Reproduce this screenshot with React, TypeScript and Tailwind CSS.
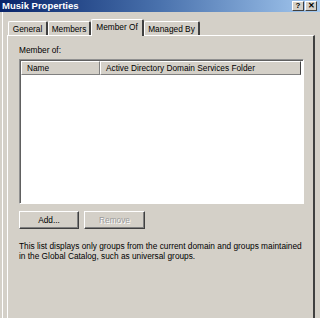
const TABS = [
  { label: 'General', width: 'w-[40px]' },
  { label: 'Members', width: 'w-[43px]' },
  { label: 'Member Of', width: 'w-[53px]', active: true },
  { label: 'Managed By', width: 'w-[56px]' },
];

const TitleButton = ({ children }: { children: React.ReactNode }) => (
  <div className="w-[12px] h-[10px] bg-[#d4d0c8] border-t border-l border-white border-r border-b border-r-[#404040] border-b-[#404040] flex items-center justify-center text-[8px] leading-none font-bold text-black">
    {children}
  </div>
);

const App = () => {
  return (
    <div className="w-[320px] h-[318px] bg-[#d4d0c8] overflow-hidden flex flex-col font-['Liberation_Sans',Arial,sans-serif] text-black">
      {/* title bar */}
      <div className="h-[12px] shrink-0 flex items-center justify-between pl-[2px] pr-[3px] bg-gradient-to-r from-[#0a246a] via-[#4a72ad] to-[#a6caf0]">
        <span className="text-white text-[9.5px] font-bold leading-none">Musik Properties</span>
        <div className="flex gap-[1px]">
          <TitleButton>?</TitleButton>
          <TitleButton>✕</TitleButton>
        </div>
      </div>

      <div className="flex-1 ml-[2px] border-l border-white pl-[4px] pr-[5px] pt-[7px] flex flex-col">
        {/* tabs */}
        <div className="flex items-end h-[16px] ml-[1px] relative z-10">
          {TABS.map((tab) =>
            tab.active ? (
              <div
                key={tab.label}
                className={`${tab.width} h-[17px] -mb-px bg-[#d4d0c8] border-t border-l border-white border-r-2 border-r-[#404040] rounded-t-[2px] text-[8.3px] leading-none flex items-start pt-[3px] justify-center`}
              >
                {tab.label}
              </div>
            ) : (
              <div
                key={tab.label}
                className={`${tab.width} h-[14px] bg-[#d4d0c8] border-t border-l border-white border-r-2 border-r-[#404040] rounded-t-[2px] text-[8.3px] leading-none flex items-center justify-center pt-[2px]`}
              >
                {tab.label}
              </div>
            ),
          )}
        </div>

        {/* tab panel */}
        <div className="flex-1 border-t border-l border-white border-r-2 border-r-[#404040] pl-[11px] pr-[9px] pt-[9px]">
          <p className="text-[8.3px] leading-[10px]">Member of:</p>

          <div className="mt-[4px] h-[145px] bg-white border border-t-[#909090] border-l-[#909090] border-b-white border-r-white shadow-[inset_1px_1px_#606060] pl-[1px] pt-[1px] pr-[2px]">
            <div className="flex h-[14px] text-[8.3px] leading-none">
              <div className="w-[79px] bg-[#d4d0c8] border-t border-l border-white border-r border-b border-r-[#808080] border-b-[#808080] flex items-center pl-[5px]">
                Name
              </div>
              <div className="flex-1 bg-[#d4d0c8] border-t border-l border-white border-r border-b border-r-[#404040] border-b-[#808080] flex items-center pl-[5px]">
                Active Directory Domain Services Folder
              </div>
            </div>
          </div>

          <div className="flex gap-[5px] mt-[7px]">
            <button className="w-[60px] h-[18px] bg-[#d4d0c8] border border-t-white border-l-white border-r-[#404040] border-b-[#404040] shadow-[inset_-1px_-1px_#808080] text-[8.3px] leading-none text-black">
              Add...
            </button>
            <button
              disabled
              className="w-[61px] h-[18px] bg-[#d4d0c8] border border-t-white border-l-white border-r-[#404040] border-b-[#404040] shadow-[inset_-1px_-1px_#808080] text-[8.3px] leading-none text-[#9a9a9a] [text-shadow:1px_1px_#fff]"
            >
              Remove
            </button>
          </div>

          <p className="mt-[12px] text-[8.3px] leading-[10px]">
            This list displays only groups from the current domain and groups maintained
            <br />
            in the Global Catalog, such as universal groups.
          </p>
        </div>
      </div>
    </div>
  );
};

export default App;
